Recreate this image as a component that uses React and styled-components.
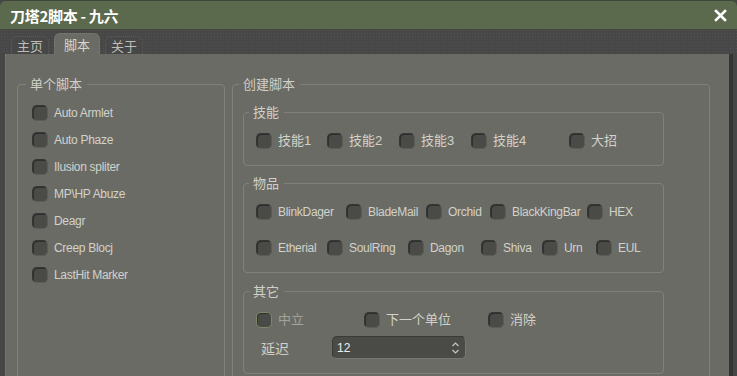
import React from "react";
import styled, { createGlobalStyle } from "styled-components";

const GlobalStyle = createGlobalStyle`
  html, body {
    margin: 0;
    padding: 0;
    background: #474747;
  }
  body {
    font-family: "Liberation Sans", "Noto Sans CJK SC", sans-serif;
  }
`;

const Window = styled.div`
  width: 737px;
  height: 376px;
  display: flex;
  flex-direction: column;
  background: #474747;
  overflow: hidden;
`;

const TitleBar = styled.div`
  height: 29px;
  flex: none;
  display: flex;
  align-items: center;
  justify-content: space-between;
  padding: 0 10px 0 10px;
  background: #5b6a4c;
  border-top: 1px solid #3e463a;
  border-radius: 6px 6px 0 0;
  box-sizing: border-box;
`;

const Title = styled.div`
  font-family: "Noto Sans CJK SC", "Liberation Sans", sans-serif;
  font-weight: 700;
  font-size: 15px;
  color: #ffffff;
  letter-spacing: -0.3px;
`;

const Close = styled.svg`
  width: 13px;
  height: 13px;
`;

const TabBar = styled.div`
  height: 25px;
  flex: none;
  display: flex;
  align-items: flex-end;
  gap: 5px;
  padding-left: 11px;
  background-image: radial-gradient(#525252 0.6px, transparent 0.8px);
  background-size: 3px 3px;
`;

const Tab = styled.div`
  height: ${(p) => (p.$active ? 21 : 18)}px;
  padding: 0 ${(p) => (p.$active ? 9 : 5)}px;
  box-sizing: border-box;
  display: flex;
  align-items: center;
  border: 1px dotted ${(p) => (p.$active ? "#7c7d77" : "#5e5e5e")};
  border-bottom: none;
  border-radius: 6px 6px 0 0;
  background: ${(p) => (p.$active ? "#6a6b65" : "#474747")};
  color: ${(p) => (p.$active ? "#d6d6ce" : "#bdbdb6")};
  font-family: "Noto Sans CJK SC", sans-serif;
  font-size: 13px;
`;

const Body = styled.div`
  flex: 1;
  margin: 0 4px 0 5px;
  background: #6a6b65;
  border-left: 1px dotted #7a7b75;
  border-right: 4px solid #353535;
  padding: 22px 0 0 11px;
  display: flex;
  gap: 7px;
  align-items: flex-start;
  min-height: 0;
`;

const Group = styled.fieldset`
  margin: 0;
  padding: ${(p) => p.$pad || "13px 12px 16px 12px"};
  border: 1px solid #80817b;
  border-radius: 4px;
  min-inline-size: 0;
  width: ${(p) => p.$w}px;
  height: ${(p) => (p.$h ? p.$h + "px" : "auto")};
  box-sizing: border-box;
  display: flex;
  flex-direction: column;
  gap: ${(p) => p.$gap || 0}px;
  flex: none;
`;

const Legend = styled.legend`
  margin-left: ${(p) => p.$ml}px;
  padding: 0 5px 0 4px;
  height: 16px;
  line-height: 16px;
  font-family: "Noto Sans CJK SC", sans-serif;
  font-size: 13px;
  color: #d0d0c8;
`;

const Row = styled.div`
  display: flex;
  align-items: center;
`;

const Item = styled.label`
  display: flex;
  align-items: center;
  gap: 6px;
  width: ${(p) => (p.$w ? p.$w + "px" : "auto")};
  flex: none;
`;

const Box = styled.span`
  width: 16px;
  height: 16px;
  box-sizing: border-box;
  border-radius: 5px;
  background: #4a4a47;
  border: 1px solid ${(p) => (p.$disabled ? "#7c8a6c" : "#353533")};
  border-right-color: ${(p) => (p.$disabled ? "#7c8a6c" : "#5b5b57")};
  border-bottom-color: ${(p) => (p.$disabled ? "#7c8a6c" : "#5b5b57")};
  box-shadow: inset 1px 1px 0 #303030;
  flex: none;
`;

const Text = styled.span`
  font-size: ${(p) => (p.$zh ? 13 : 12)}px;
  letter-spacing: ${(p) => (p.$zh ? 0 : -0.3)}px;
  color: ${(p) => (p.$disabled ? "#a3a39c" : "#d2d2ca")};
  white-space: nowrap;
  line-height: 16px;
`;

const Field = styled.div`
  display: flex;
  align-items: center;
  height: 23px;
  margin-top: 8px;
`;

const FieldLabel = styled.span`
  width: 71px;
  padding-left: 5px;
  font-family: "Noto Sans CJK SC", sans-serif;
  font-size: 14px;
  color: #d2d2ca;
`;

const Spin = styled.div`
  width: 134px;
  height: 23px;
  box-sizing: border-box;
  border-radius: 5px;
  background: #4a4b47;
  border: 1px solid #3a3a37;
  border-bottom-color: #77786f;
  border-right-color: #77786f;
  display: flex;
  align-items: center;
  justify-content: space-between;
  padding: 0 5px 0 4px;
  font-size: 12px;
  color: #eeeeee;
`;

const isZh = (s) => /[\u4e00-\u9fff]/.test(s) && !/[A-Za-z]/.test(s);

const Check = ({ label, w, disabled }) => (
  <Item $w={w}>
    <Box $disabled={disabled} />
    <Text $zh={isZh(label)} $disabled={disabled}>
      {label}
    </Text>
  </Item>
);

const singles = [
  "Auto Armlet",
  "Auto Phaze",
  "Ilusion spliter",
  "MP\\HP Abuze",
  "Deagr",
  "Creep Blocj",
  "LastHit Marker",
];

const skills = [
  ["技能1", 71],
  ["技能2", 72],
  ["技能3", 72],
  ["技能4", 98],
  ["大招"],
];

const items1 = [
  ["BlinkDager", 90],
  ["BladeMail", 80],
  ["Orchid", 64],
  ["BlackKingBar", 97],
  ["HEX"],
];

const items2 = [
  ["Etherial", 71],
  ["SoulRing", 81],
  ["Dagon", 73],
  ["Shiva", 61],
  ["Urn", 54],
  ["EUL"],
];

export default function App() {
  return (
    <Window>
      <GlobalStyle />
      <TitleBar>
        <Title>刀塔2脚本 - 九六</Title>
        <Close viewBox="0 0 13 13">
          <path d="M2 2 L11 11 M11 2 L2 11" stroke="#ffffff" strokeWidth="2.6" strokeLinecap="square" />
        </Close>
      </TitleBar>
      <TabBar>
        <Tab>主页</Tab>
        <Tab $active>脚本</Tab>
        <Tab>关于</Tab>
      </TabBar>
      <Body>
        <Group $w={208} $h={320} $gap={11} $pad="13px 14px 16px 14px">
          <Legend $ml={-6}>单个脚本</Legend>
          {singles.map((s) => (
            <Check key={s} label={s} />
          ))}
        </Group>
        <Group $w={478} $h={320} $pad="12px 10px 0 10px" $gap={9}>
          <Legend $ml={-4}>创建脚本</Legend>
          <Group $w={421}>
            <Legend $ml={-7}>技能</Legend>
            <Row>
              {skills.map(([l, w]) => (
                <Check key={l} label={l} w={w} />
              ))}
            </Row>
          </Group>
          <Group $w={421} $gap={20}>
            <Legend $ml={-7}>物品</Legend>
            <Row>
              {items1.map(([l, w]) => (
                <Check key={l} label={l} w={w} />
              ))}
            </Row>
            <Row>
              {items2.map(([l, w]) => (
                <Check key={l} label={l} w={w} />
              ))}
            </Row>
          </Group>
          <Group $w={421} $pad="13px 12px 14px 12px" style={{ marginTop: 1 }}>
            <Legend $ml={-7}>其它</Legend>
            <Row>
              <Check label="中立" w={108} disabled />
              <Check label="下一个单位" w={124} />
              <Check label="消除" />
            </Row>
            <Field>
              <FieldLabel>延迟</FieldLabel>
              <Spin>
                <span>12</span>
                <svg width="9" height="16" viewBox="0 0 9 16">
                  <path d="M1.5 6 L4.5 3 L7.5 6" fill="none" stroke="#c8c8c0" strokeWidth="1.2" />
                  <path d="M1.5 10 L4.5 13 L7.5 10" fill="none" stroke="#c8c8c0" strokeWidth="1.2" />
                </svg>
              </Spin>
            </Field>
          </Group>
        </Group>
      </Body>
    </Window>
  );
}
